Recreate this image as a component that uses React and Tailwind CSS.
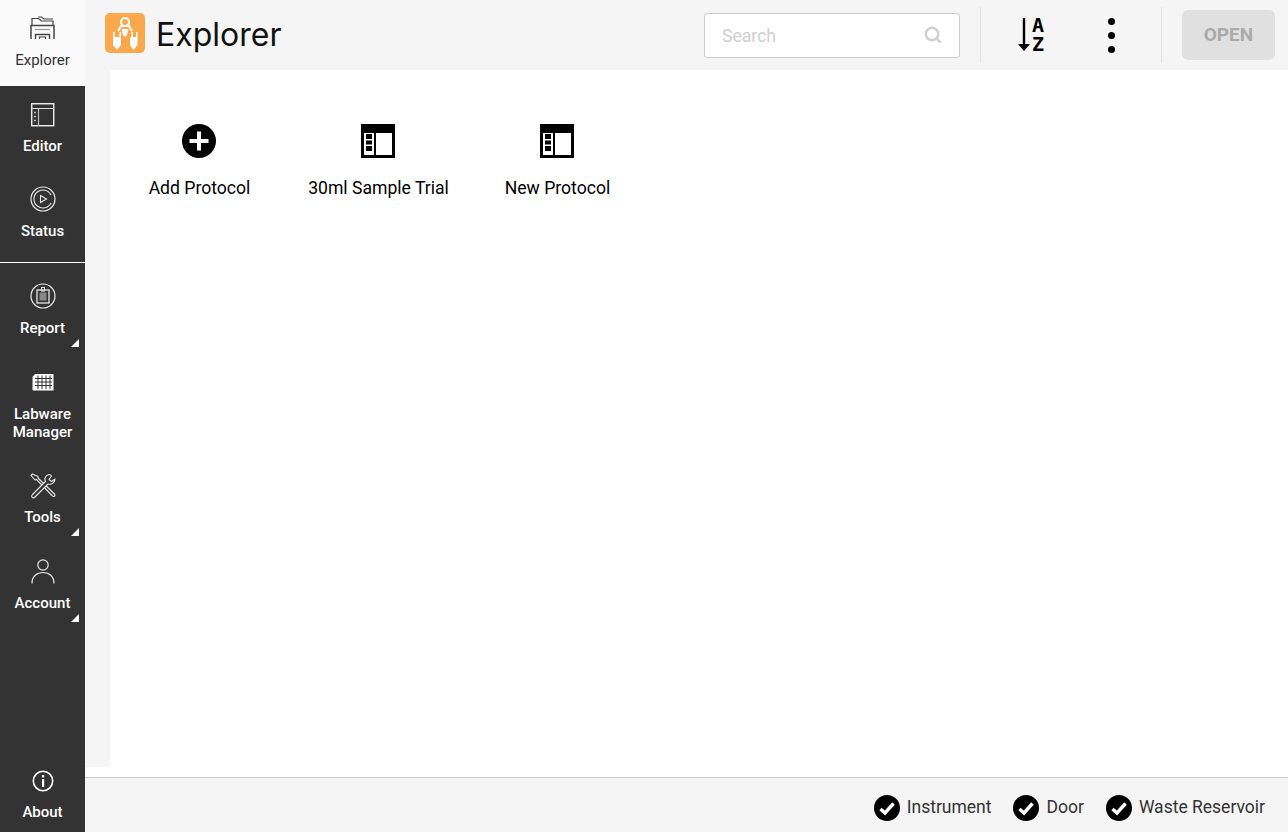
const roboto = { fontFamily: 'Roboto, sans-serif' };

function Corner() {
  return (
    <svg className="absolute right-[6px] bottom-[1px]" width="8" height="8" viewBox="0 0 8 8">
      <path d="M8 0V8H0Z" fill="#fff" />
    </svg>
  );
}

function FolderIcon() {
  return (
    <svg width="25" height="24" viewBox="0 0 25 24" fill="none" stroke="#444" strokeWidth="1.2">
      <path d="M1 23V9.5H24V23" strokeWidth="1.5" />
      <path d="M2 9V2.5H8.5L11.5 5H23V9" />
      <path d="M8 1H11.5L14 3H23" />
      <path d="M5.5 23V18.5H19.5V23" strokeWidth="1.4" />
      <path d="M9.5 23V21H15.5V23" />
      <path d="M5 13.5H20" stroke="#999" />
    </svg>
  );
}

function EditorIcon() {
  return (
    <svg width="24" height="24" viewBox="0 0 24 24" fill="none">
      <rect x="0.75" y="0.75" width="22" height="22" stroke="#fff" strokeWidth="1.3" />
      <path d="M1 5.5H23" stroke="#ddd" />
      <path d="M7.5 6V23" stroke="#bbb" strokeWidth="1.2" />
      <path d="M3 9.5H5M3 13.5H5M3 17.5H5" stroke="#bbb" strokeWidth="1.4" />
    </svg>
  );
}

function StatusIcon() {
  return (
    <svg width="26" height="26" viewBox="0 0 26 26" fill="none" stroke="#e8e8e8">
      <circle cx="13" cy="13" r="12" strokeWidth="1.2" />
      <path d="M21 17A9 9 0 1 1 21 9" strokeWidth="1.1" />
      <path d="M10.5 9.5V16.5L16.5 13Z" strokeWidth="1.1" />
    </svg>
  );
}

function ReportIcon() {
  return (
    <svg width="26" height="26" viewBox="0 0 26 26" fill="none" stroke="#e8e8e8">
      <circle cx="13" cy="13" r="12" strokeWidth="1.2" />
      <rect x="7" y="7" width="12" height="13" strokeWidth="1.3" />
      <rect x="9.5" y="9.5" width="7" height="8" fill="#888" stroke="none" />
      <rect x="11.5" y="4.5" width="3" height="3.5" strokeWidth="1" />
    </svg>
  );
}

function LabwareIcon() {
  return (
    <svg width="22" height="17" viewBox="0 0 22 17">
      <path d="M3 0H21.5V16.5H1.5Q0.5 16.5 0.5 15.5V3Z" fill="#fff" />
      <path d="M3 4.5H20M3 8H20M3 11.5H20M6 1.5V15M10 1.5V15M14 1.5V15M18 1.5V15" stroke="#333" strokeWidth="1" fill="none" />
    </svg>
  );
}

function ToolsIcon() {
  return (
    <svg width="26" height="26" viewBox="0 0 26 26" fill="none" stroke="#e8e8e8" strokeWidth="1.1" strokeLinejoin="round">
      <path d="M2.5 1L1 2.5L5 7L6.5 6.5L22 22.5C24 25 26 22.5 24 20.5L8 5L8 3.5Z" />
      <path d="M19 1.5C15.5 2 14 6 15.5 8.5L2.5 21.5C0.5 24 3 26 5 24L18 11C21 12 25 10 25 6L21.5 8.5L19 6.5L21.5 3C21 2 20 1.5 19 1.5Z" fill="#333" />
    </svg>
  );
}

function AccountIcon() {
  return (
    <svg width="24" height="25" viewBox="0 0 24 25" fill="none" stroke="#e8e8e8" strokeWidth="1.2">
      <circle cx="12" cy="6" r="5.2" />
      <path d="M1 24.5C1 17 6 13.5 12 13.5S23 17 23 24.5" />
    </svg>
  );
}

function AboutIcon() {
  return (
    <svg width="22" height="22" viewBox="0 0 22 22" fill="none">
      <circle cx="11" cy="11" r="9.7" stroke="#fff" strokeWidth="1.6" />
      <rect x="10" y="9" width="2.2" height="8" fill="#fff" />
      <rect x="10" y="5" width="2.2" height="2.4" fill="#fff" />
    </svg>
  );
}

function Logo() {
  return (
    <div className="w-[40px] h-[40px] rounded-[5px] bg-[#fba74b] shrink-0 self-start mt-[13px]">
      <svg width="40" height="40" viewBox="0 0 40 40">
        <circle cx="20" cy="9" r="4" fill="none" stroke="#fff" strokeWidth="2.2" />
        <path d="M13 18L16 13H24L27 18" fill="none" stroke="#fff" strokeWidth="2" />
        <path d="M16.5 16H23.5L22 22L20 24L18 22Z" fill="#fff" />
        <path d="M8 19H9.5V24H14.5V19H16V32L12 37L8 32Z" fill="#fff" />
        <path d="M25 24H26.5V19H28V24H31V19H32.5V32L28.5 37L25 32Z" fill="#fff" />
      </svg>
    </div>
  );
}

function LayoutIcon() {
  return (
    <svg width="34" height="34" viewBox="0 0 34 34">
      <path d="M0 0H34V34H0Z" fill="#000" />
      <rect x="3" y="9" width="10" height="22" fill="#fff" />
      <rect x="15" y="9" width="16" height="22" fill="#fff" />
      <rect x="5" y="10" width="6" height="5" fill="#000" />
      <rect x="5" y="16.5" width="6" height="4" fill="#000" />
      <rect x="5" y="22" width="6" height="5" fill="#000" />
    </svg>
  );
}

function AddIcon() {
  return (
    <svg width="34" height="34" viewBox="0 0 34 34">
      <circle cx="17" cy="17" r="17" fill="#000" />
      <path d="M17 7.5V26.5M7.5 17H26.5" stroke="#fff" strokeWidth="4" />
    </svg>
  );
}

function CheckIcon() {
  return (
    <svg width="26" height="26" viewBox="0 0 26 26" className="shrink-0">
      <circle cx="13" cy="13" r="13" fill="#000" />
      <path d="M6.5 14L11 18L19.5 8.5" fill="none" stroke="#fff" strokeWidth="3.4" />
    </svg>
  );
}

function NavItem({ icon, label, heightClass, topClass, arrow, light }) {
  return (
    <div className={`relative flex flex-col items-center ${heightClass} ${topClass} ${light ? 'bg-[#fafafa] text-[#333]' : 'text-white font-medium'}`}>
      {icon}
      {label}
      {arrow && <Corner />}
    </div>
  );
}

function Sidebar() {
  return (
    <aside className="w-[85px] h-[832px] bg-[#333333] flex flex-col shrink-0 text-[15px] leading-[18px] text-center" style={roboto}>
      <NavItem light heightClass="h-[86px]" topClass="pt-[16px]" icon={<FolderIcon />} label={<span className="mt-[11px]">Explorer</span>} />
      <NavItem heightClass="h-[85px]" topClass="pt-[17px]" icon={<EditorIcon />} label={<span className="mt-[10px]">Editor</span>} />
      <NavItem heightClass="h-[91px]" topClass="pt-[15px]" icon={<StatusIcon />} label={<span className="mt-[10px]">Status</span>} />
      <div className="h-px bg-white shrink-0" />
      <NavItem arrow heightClass="h-[85px]" topClass="pt-[20px]" icon={<ReportIcon />} label={<span className="mt-[10px]">Report</span>} />
      <NavItem heightClass="h-[104px]" topClass="pt-[26px]" icon={<LabwareIcon />} label={<span className="mt-[14px]">Labware<br />Manager</span>} />
      <NavItem arrow heightClass="h-[85px]" topClass="pt-[21px]" icon={<ToolsIcon />} label={<span className="mt-[9px]">Tools</span>} />
      <NavItem arrow heightClass="h-[86px]" topClass="pt-[22px]" icon={<AccountIcon />} label={<span className="mt-[10px]">Account</span>} />
      <div className="mt-auto flex flex-col items-center h-[72px] pt-[10px] text-white font-medium">
        <AboutIcon />
        <span className="mt-[11px]">About</span>
      </div>
    </aside>
  );
}

function Header() {
  return (
    <header className="h-[70px] bg-[#f5f5f5] flex items-center pl-[20px] pr-[13px] shrink-0">
      <Logo />
      <div className="ml-[11px] text-[32px] leading-[40px] text-[#111]" style={{ fontFamily: 'Inter, sans-serif' }}>Explorer</div>

      <div className="ml-auto w-[256px] h-[45px] bg-white border border-[#cccccc] rounded-[3px] flex items-center pl-[17px] pr-[17px] text-[17.6px] text-[#cfcfcf]" style={roboto}>
        <span className="pt-[2px]">Search</span>
        <svg className="ml-auto" width="18" height="18" viewBox="0 0 18 18" fill="none" stroke="#cfcfcf" strokeWidth="2.4">
          <circle cx="8" cy="8" r="6.2" />
          <path d="M12.5 12.5L16.5 16.5" />
        </svg>
      </div>

      <div className="w-px h-[56px] bg-[#e2e2e2] ml-[20px]" />

      <div className="ml-[36px] flex items-center w-[30px] h-[38px]">
        <svg width="14" height="34" viewBox="0 0 14 34" className="shrink-0">
          <path d="M7 0V30" stroke="#000" strokeWidth="2.4" />
          <path d="M1 26H13L7 33Z" fill="#000" />
        </svg>
        <div className="flex flex-col text-[20px] leading-[19px] font-bold text-black ml-[1px]" style={{ fontFamily: '"DejaVu Sans Mono", monospace' }}>
          <span>A</span>
          <span>Z</span>
        </div>
      </div>

      <div className="ml-[61px] flex flex-col gap-[7px] w-[7px]">
        <div className="w-[7px] h-[7px] rounded-full bg-black" />
        <div className="w-[7px] h-[7px] rounded-full bg-black" />
        <div className="w-[7px] h-[7px] rounded-full bg-black" />
      </div>

      <div className="w-px h-[56px] bg-[#e2e2e2] ml-[46px]" />

      <button className="ml-[20px] w-[93px] h-[50px] rounded-[6px] bg-[#e0e0e0] text-[#aaaaaa] text-[19px] font-bold" style={roboto}>OPEN</button>
    </header>
  );
}

function ProtocolItem({ icon, label }) {
  return (
    <div className="w-[179px] flex flex-col items-center">
      <div className="mr-[2px]">{icon}</div>
      <span className="mt-[18px] text-[17.6px] leading-[24px] text-black" style={roboto}>{label}</span>
    </div>
  );
}

function StatusItem({ label }) {
  return (
    <div className="flex items-center gap-[7px]">
      <CheckIcon />
      <span>{label}</span>
    </div>
  );
}

export default function App() {
  return (
    <div className="w-[1288px] h-[832px] flex overflow-hidden bg-white">
      <Sidebar />
      <div className="flex-1 flex flex-col min-w-0">
        <Header />
        <main className="flex-1 flex min-h-0">
          <div className="w-[25px] bg-[#f5f5f5]" />
          <div className="flex-1 flex items-start pt-[54px]">
            <ProtocolItem icon={<AddIcon />} label="Add Protocol" />
            <ProtocolItem icon={<LayoutIcon />} label="30ml Sample Trial" />
            <ProtocolItem icon={<LayoutIcon />} label="New Protocol" />
          </div>
        </main>
        <div className="h-[10px] bg-white shrink-0" />
        <footer className="h-[55px] shrink-0 border-t border-[#cccccc] bg-[#f5f5f5] flex items-center justify-end gap-[22px] pt-[5px] pr-[23px] text-[17.5px] text-[#333]" style={roboto}>
          <StatusItem label="Instrument" />
          <StatusItem label="Door" />
          <StatusItem label="Waste Reservoir" />
        </footer>
      </div>
    </div>
  );
}
